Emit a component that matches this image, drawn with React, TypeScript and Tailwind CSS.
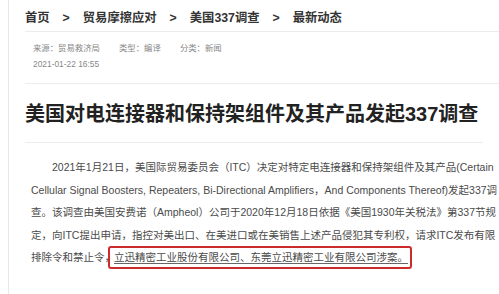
import React from "react";

const font = { fontFamily: '"Liberation Sans", "Noto Sans CJK SC", sans-serif' };

function Sep() {
  return <span className="mx-[13px]">&gt;</span>;
}

export default function App() {
  const justifyLine = "block text-justify [text-align-last:justify] whitespace-nowrap";
  return (
    <div className="w-[499px] h-[294px] bg-white overflow-hidden flex" style={font}>
      <div className="w-[9px] shrink-0 border-r border-[#e8e8e8]" />
      <div className="flex-1 pl-[16px] flex flex-col">
        <div className="pt-[10px] pb-[5px] leading-[16px] text-[12.3px] font-bold text-[#333] border-b border-[#ececec] whitespace-nowrap">
          首页<Sep />贸易摩擦应对<Sep />美国337调查<Sep />最新动态
        </div>
        <div className="pl-[8px] pt-[8px] pb-[11px] text-[8.4px] leading-[16px] text-[#888] border-b border-[#ececec]">
          <div className="flex gap-[19px] whitespace-nowrap">
            <span>来源：贸易救济局</span>
            <span>类型：编译</span>
            <span>分类：新闻</span>
          </div>
          <div>2021-01-22 16:55</div>
        </div>
        <div className="mr-[16px] pt-[16px] pb-[14px] text-[20px] leading-[28px] font-bold text-[#222] border-b border-[#ececec] whitespace-nowrap">
          美国对电连接器和保持架组件及其产品发起337调查
        </div>
        <div className="pl-[6px] w-[457px] pt-[13px] text-[10.5px] leading-[22.5px] text-[#4a4a4a]">
          <span className={justifyLine}>
            <span className="inline-block w-[21px]" />
            2021年1月21日，美国际贸易委员会（ITC）决定对特定电连接器和保持架组件及其产品(Certain
          </span>
          <span className={justifyLine}>
            Cellular Signal Boosters, Repeaters, Bi-Directional Amplifiers，And Components Thereof)发起337调
          </span>
          <span className={justifyLine}>
            查。该调查由美国安费诺（Ampheol）公司于2020年12月18日依据《美国1930年关税法》第337节规
          </span>
          <span className={justifyLine}>
            定，向ITC提出申请，指控对美出口、在美进口或在美销售上述产品侵犯其专利权，请求ITC发布有限
          </span>
          <span className="block whitespace-nowrap">
            排除令和禁止令，
            <span className="inline-block -ml-[7px] pl-[4px] pr-[2px] border-2 border-[#cc2b2b] rounded-[3px] leading-[19px]">
              <span className="underline decoration-[#666] underline-offset-2">立迅精密工业股份有限公司、东莞立迅精密工业有限公司涉案。</span>
            </span>
          </span>
        </div>
      </div>
    </div>
  );
}
